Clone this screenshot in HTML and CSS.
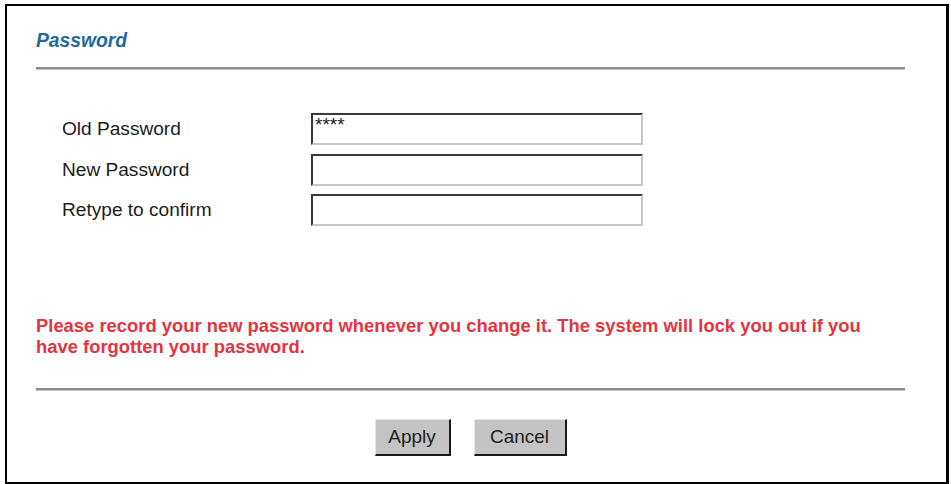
FILE: index.html
```html
<!DOCTYPE html>
<html>
<head>
<meta charset="utf-8">
<link rel="stylesheet" href="styles.css">
</head>
<body>
<div class="panel">
  <div class="title">Password</div>
  <div class="rule rule-top"></div>
  <div class="fields">
    <label class="label">Old Password</label>
    <input class="field" type="text" value="****" readonly>
    <label class="label">New Password</label>
    <input class="field" type="text" value="" readonly>
    <label class="label">Retype to confirm</label>
    <input class="field" type="text" value="" readonly>
  </div>
  <p class="warning">Please record your new password whenever you change it. The system will lock you out if you have forgotten your password.</p>
  <div class="rule rule-bottom"></div>
  <div class="actions">
    <button class="btn btn-apply" type="button">Apply</button>
    <button class="btn btn-cancel" type="button">Cancel</button>
  </div>
</div>
</body>
</html>
```

FILE: styles.css
```css
html, body {
  margin: 0;
  padding: 0;
  background: #ffffff;
}

body {
  font-family: "Liberation Sans", Arial, sans-serif;
  overflow: hidden;
}

.panel {
  margin: 4px 0 0 5px;
  width: 944px;
  height: 480px;
  box-sizing: border-box;
  border: 2px solid #000;
  border-right-width: 3px;
  background: #fff;
  padding: 0 41px 0 29px;
}

.title {
  margin-top: 24px;
  font-size: 19.3px;
  line-height: 22px;
  font-weight: bold;
  font-style: italic;
  color: #1f6b9c;
}

.rule {
  height: 3px;
  box-sizing: border-box;
  border-top: 2px solid #8c8c8c;
  border-bottom: 1px solid #c4c4c4;
}

.rule-top {
  margin-top: 15px;
}

.fields {
  margin-top: 43px;
  padding-left: 26px;
  display: grid;
  grid-template-columns: 249px 332px;
  grid-auto-rows: 32px;
  row-gap: 8.5px;
  align-items: center;
}

.label {
  font-size: 19.1px;
  color: #1c1c1c;
}

.field {
  height: 32px;
  width: 332px;
  box-sizing: border-box;
  margin: 0;
  border-style: solid;
  border-width: 2px;
  border-color: #3a3a3a #c8c8c8 #c8c8c8 #3a3a3a;
  background: #fff;
  padding: 0 3px 8px 2px;
  font-family: "Liberation Sans", Arial, sans-serif;
  font-size: 19px;
  line-height: 20px;
  color: #222;
  outline: none;
}

.warning {
  margin: 89px 0 0 0;
  max-width: 850px;
  font-size: 18.4px;
  line-height: 21px;
  font-weight: bold;
  color: #e3343f;
}

.rule-bottom {
  margin-top: 31px;
}

.actions {
  margin-top: 28px;
  display: flex;
  justify-content: center;
  gap: 23px;
}

.btn {
  height: 37px;
  box-sizing: border-box;
  margin: 0;
  padding: 0;
  background: #c4c4c4;
  border-style: solid;
  border-width: 1px 2px 2px 1px;
  border-color: #e6e6e6 #1a1a1a #1a1a1a #e6e6e6;
  font-family: "Liberation Sans", Arial, sans-serif;
  font-size: 19px;
  color: #1e1e1e;
}

.btn-apply {
  width: 76px;
}

.btn-cancel {
  width: 93px;
}
```
